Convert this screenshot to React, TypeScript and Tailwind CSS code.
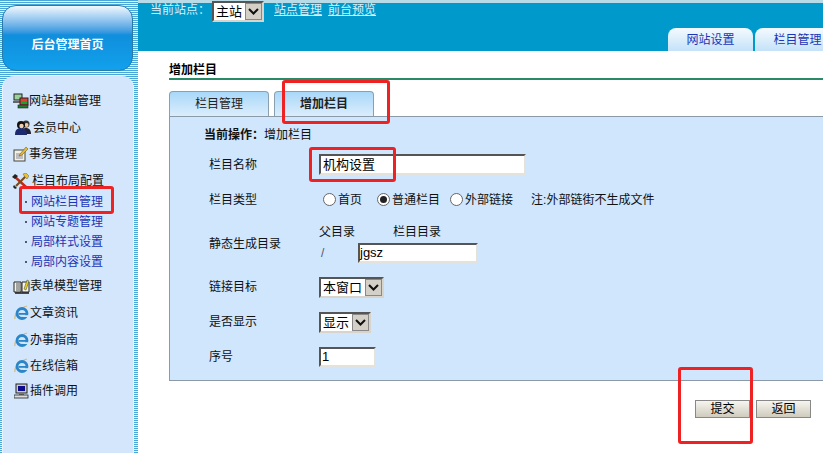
import React from "react";

const font = "font-['Liberation_Sans','Noto_Sans_CJK_SC',sans-serif]";

function IconNetwork() {
  return (
    <svg width="16" height="16" viewBox="0 0 16 16" className="shrink-0">
      <rect x="1" y="1" width="8" height="6" fill="#9ad29a" stroke="#222" />
      <rect x="0" y="8" width="8" height="2" fill="#666" />
      <rect x="7" y="5" width="8" height="7" fill="#e04030" stroke="#222" />
      <rect x="8" y="8" width="6" height="3" fill="#18a030" />
      <rect x="5" y="12" width="10" height="3" fill="#1f7a30" stroke="#222" strokeWidth="0.6" />
    </svg>
  );
}

function IconPeople() {
  return (
    <svg width="17" height="15" viewBox="0 0 17 15" className="shrink-0">
      <circle cx="11" cy="4" r="3.5" fill="#333" />
      <path d="M6 14c0-4 2-6 5-6s5 2 5 6z" fill="#223" />
      <circle cx="11.5" cy="5" r="2" fill="#f0c9a0" />
      <circle cx="6" cy="5" r="4" fill="#111" />
      <path d="M0 15c0-5 2-7 6-7s6 2 6 7z" fill="#1c2a70" />
      <circle cx="6.5" cy="6" r="2.2" fill="#f2d0b0" />
    </svg>
  );
}

function IconNote() {
  return (
    <svg width="16" height="16" viewBox="0 0 16 16" className="shrink-0">
      <rect x="1" y="4" width="11" height="11" fill="#f4f1e4" stroke="#444" />
      <path d="M3 8h7M3 10h7M3 12h7" stroke="#889" />
      <path d="M7 8l6-7 2 2-6 6-3 1z" fill="#e8b830" stroke="#664" strokeWidth="0.6" />
    </svg>
  );
}

function IconTools() {
  return (
    <svg width="17" height="16" viewBox="0 0 17 16" className="shrink-0">
      <path d="M2 3l12 11" stroke="#c02818" strokeWidth="2.4" />
      <path d="M0 4l3-3 3 2-3 3z" fill="#222" />
      <path d="M14 3L4 13" stroke="#7a4a18" strokeWidth="2.2" />
      <path d="M11 1l3-1 3 3-2 3-2-2z" fill="#e8c030" stroke="#665" strokeWidth="0.5" />
      <path d="M2 12l3 3-2 1-2-2z" fill="#222" />
    </svg>
  );
}

function IconBook() {
  return (
    <svg width="17" height="15" viewBox="0 0 17 15" className="shrink-0">
      <path d="M1 3h7v10H1zM9 3h7v10H9z" fill="#f4f4ec" stroke="#222" />
      <path d="M2 14h14" stroke="#222" strokeWidth="1.6" />
      <path d="M3 5h4M3 7h4M3 9h4M3 11h4" stroke="#555" />
      <path d="M11 10l3-9 2 1-3 9z" fill="#e8d020" stroke="#443" strokeWidth="0.5" />
    </svg>
  );
}

function IconIE() {
  return (
    <svg width="15" height="16" viewBox="0 0 15 16" className="shrink-0">
      <path d="M1 14C0 10 5 3 13 1" stroke="#d8b878" strokeWidth="1.2" fill="none" />
      <circle cx="8" cy="8.5" r="5" fill="none" stroke="#2a86c8" strokeWidth="2.8" />
      <rect x="4.5" y="8" width="7.5" height="1.8" fill="#2a86c8" />
      <rect x="9" y="10.2" width="5" height="1.8" fill="#d3e6fb" />
    </svg>
  );
}

function IconComputer() {
  return (
    <svg width="15" height="16" viewBox="0 0 15 16" className="shrink-0">
      <rect x="2" y="1" width="11" height="9" fill="#ccc" stroke="#222" />
      <rect x="4" y="3" width="7" height="5" fill="#0a0a90" />
      <rect x="5" y="10" width="5" height="2" fill="#777" />
      <rect x="0" y="12" width="14" height="3" fill="#ddd" stroke="#222" strokeWidth="0.8" />
    </svg>
  );
}

function NavItem(props: { icon: React.ReactNode; label: string; h: string; indent: string }) {
  return (
    <div className={`flex items-center text-[12px] text-[#111] ${props.h} ${props.indent}`}>
      {props.icon}
      <span>{props.label}</span>
    </div>
  );
}

function SubItem(props: { label: string }) {
  return (
    <div className="flex items-center h-[20px] pl-[22px] gap-[4px] text-[12px] text-[#1a35b8]">
      <span className="w-[2px] h-[2px] bg-[#557]" />
      <span>{props.label}</span>
    </div>
  );
}

function Select(props: { text: string }) {
  return (
    <div className="inline-flex h-[21px] items-stretch border-2 border-t-[#555] border-l-[#555] border-r-[#d8d4cc] border-b-[#d8d4cc] bg-white text-[13px] text-black">
      <span className="pl-[2px] pr-[3px] leading-[17px]">{props.text}</span>
      <span className="w-[17px] bg-[#d4d0c8] border border-[#888] flex items-center justify-center">
        <svg width="11" height="7" viewBox="0 0 11 7">
          <path d="M1 1l4.5 4.5L10 1" fill="none" stroke="#111" strokeWidth="2" />
        </svg>
      </span>
    </div>
  );
}

function Radio(props: { checked?: boolean; label: string; className?: string }) {
  return (
    <span className={`inline-flex items-center gap-[2px] ${props.className || ""}`}>
      <span className="w-[13px] h-[13px] rounded-full border border-[#666] bg-white flex items-center justify-center">
        {props.checked && <span className="w-[7px] h-[7px] rounded-full bg-[#222]" />}
      </span>
      <span>{props.label}</span>
    </span>
  );
}

function Row(props: { label: string; h: string; children: React.ReactNode }) {
  return (
    <div className={`flex items-center ${props.h}`}>
      <div className="w-[115px] pl-[5px] shrink-0">{props.label}</div>
      {props.children}
    </div>
  );
}

function Mark(props: { className: string }) {
  return <div className={`absolute border-[3px] border-[#ee2222] rounded-[3px] ${props.className}`} />;
}

export default function App() {
  const inset = "border-2 border-t-[#555] border-l-[#555] border-r-[#e4e2da] border-b-[#e4e2da] bg-white";
  const tab = "h-[25px] rounded-t-[4px] border border-b-0 border-[#8aa0b0] bg-gradient-to-b from-[#a8d8f8] to-[#dcedfc] flex items-center justify-center text-[12px] text-[#222]";
  const btn = "h-[18px] w-[55px] border border-[#888] bg-gradient-to-b from-[#f6f5ef] to-[#cfcbbd] flex items-center justify-center text-[12px] text-black";
  const topTab = "w-[85px] h-[23px] rounded-t-[8px] bg-gradient-to-b from-[#f4fafe] to-[#c4e2f8] flex items-center justify-center text-[12px] text-[#1a35b8]";

  return (
    <div className={`relative w-[823px] h-[453px] overflow-hidden bg-white flex ${font}`}>
      <aside className="w-[138px] h-full shrink-0 flex flex-col bg-[repeating-linear-gradient(180deg,#4aa6d6_0px,#4aa6d6_1px,#e6f3fb_1px,#e6f3fb_2px)] pl-[2px] pr-[4px] pt-[5px]">
        <div className="h-[66px] w-[131px] rounded-[14px] border border-[#2a7aa8] bg-gradient-to-b from-[#f0f8fd] via-[#0f8fdc] via-45% to-[#12a0ec] flex items-center justify-center pt-[13px] text-[12px] font-bold text-white">
          后台管理首页
        </div>
        <nav className="mt-[5px] flex-1 rounded-t-[12px] bg-[#d3e6fb] border-x border-[#e8f2fc] pt-[12px]">
          <NavItem icon={<IconNetwork />} label="网站基础管理" h="h-[26px]" indent="pl-[10px]" />
          <NavItem icon={<IconPeople />} label="会员中心" h="h-[27px]" indent="pl-[12px] gap-[1px]" />
          <NavItem icon={<IconNote />} label="事务管理" h="h-[26px]" indent="pl-[10px]" />
          <NavItem icon={<IconTools />} label="栏目布局配置" h="h-[27px]" indent="pl-[9px] gap-[3px]" />
          <div className="-mt-[2px]">
            <SubItem label="网站栏目管理" />
            <SubItem label="网站专题管理" />
            <SubItem label="局部样式设置" />
            <SubItem label="局部内容设置" />
          </div>
          <NavItem icon={<IconBook />} label="表单模型管理" h="h-[28px]" indent="pl-[10px]" />
          <NavItem icon={<IconIE />} label="文章资讯" h="h-[26px]" indent="pl-[11px] gap-[1px]" />
          <NavItem icon={<IconIE />} label="办事指南" h="h-[27px]" indent="pl-[11px] gap-[1px]" />
          <NavItem icon={<IconIE />} label="在线信箱" h="h-[25px]" indent="pl-[11px] gap-[1px]" />
          <NavItem icon={<IconComputer />} label="插件调用" h="h-[26px]" indent="pl-[11px] gap-[1px]" />
        </nav>
      </aside>

      <main className="flex-1 flex flex-col min-w-0">
        <div className="h-[3px] bg-[#b8dbe8]" />
        <header className="h-[48px] bg-[#0099cc] flex justify-between">
          <div className="flex items-start pl-[12px] text-[12px] text-[#d8f0fa]">
            <span className="leading-[14px] mr-[4px]">当前站点：</span>
            <div className="-mt-[2px] mr-[10px] -ml-[2px]">
              <Select text="主站" />
            </div>
            <span className="leading-[14px] mr-[6px] underline">站点管理</span>
            <span className="leading-[14px] underline">前台预览</span>
          </div>
          <div className="flex items-end gap-[2px] -mr-[17px]">
            <div className={topTab}>网站设置</div>
            <div className={topTab}>栏目管理</div>
          </div>
        </header>

        <section className="pl-[31px] pt-[12px] flex-1 text-[12px] text-[#111]">
          <h1 className="h-[17px] leading-[14px] text-[12px] font-bold border-b-2 border-[#2a8a68] text-black">增加栏目</h1>

          <div className="mt-[11px] flex gap-[5px]">
            <div className={`${tab} w-[100px]`}>栏目管理</div>
            <div className={`${tab} w-[100px] font-bold`}>增加栏目</div>
          </div>

          <div className="h-[265px] border border-[#8a9aa8] border-r-0 bg-[#cfe6fd] pt-[11px]">
            <div className="h-[15px] pl-[34px] leading-[15px]"><b>当前操作：</b>增加栏目</div>
            <div className="pl-[34px]">
              <Row label="栏目名称" h="h-[35px] mt-[4px]">
                <div className={`${inset} w-[207px] h-[21px] pl-[2px] text-[13px] leading-[17px] text-black`}>机构设置</div>
              </Row>
              <Row label="栏目类型" h="h-[35px]">
                <div className="flex items-center gap-[10px] pl-[4px]">
                  <Radio label="首页" className="mr-[5px]" />
                  <Radio checked label="普通栏目" />
                  <Radio label="外部链接" />
                  <span className="ml-[8px]">注:外部链街不生成文件</span>
                </div>
              </Row>
              <Row label="静态生成目录" h="h-[53px]">
                <div className="flex flex-col">
                  <div className="h-[20px] -mt-[2px] flex">
                    <span className="w-[74px]">父目录</span>
                    <span>栏目目录</span>
                  </div>
                  <div className="flex items-center h-[20px]">
                    <span className="w-[39px] pl-[2px] text-[#556]">/</span>
                    <div className={`${inset} w-[120px] h-[20px] text-[13px] leading-[16px] text-black`}>jgsz</div>
                  </div>
                </div>
              </Row>
              <Row label="链接目标" h="h-[34px]"><Select text="本窗口" /></Row>
              <Row label="是否显示" h="h-[36px]"><Select text="显示" /></Row>
              <Row label="序号" h="h-[34px]">
                <div className={`${inset} w-[57px] h-[20px] pl-[1px] text-[13px] leading-[16px] text-black`}>1</div>
              </Row>
            </div>
          </div>

          <div className="flex justify-end gap-[6px] pt-[19px] pr-[12px]">
            <div className={btn}>提交</div>
            <div className={btn}>返回</div>
          </div>
        </section>
      </main>

      {/* red annotation boxes drawn over the screenshot */}
      <Mark className="left-[19px] top-[186px] w-[95px] h-[28px]" />
      <Mark className="left-[282px] top-[80px] w-[108px] h-[44px]" />
      <Mark className="left-[309px] top-[147px] w-[87px] h-[35px]" />
      <Mark className="left-[678px] top-[367px] w-[75px] h-[77px]" />
    </div>
  );
}
